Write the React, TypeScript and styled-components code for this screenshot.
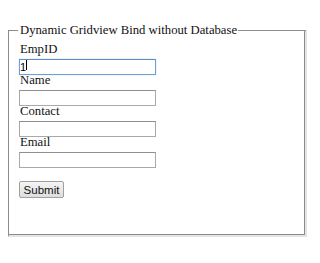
import React from "react";
import styled, { createGlobalStyle } from "styled-components";

const Global = createGlobalStyle`
  html, body { margin: 0; padding: 0; background: #ffffff; }
  body { font-family: "Liberation Serif", "Times New Roman", serif; color: #000; }
`;

const Page = styled.div`
  width: 320px;
  height: 263px;
  padding: 23px 0 0 8px;
  box-sizing: border-box;
`;

const Frame = styled.fieldset`
  box-sizing: border-box;
  width: 299px;
  height: 214px;
  margin: 0;
  padding: 4px 10px 0 10px;
  border-color: #8c8c8c #e4e4e4 #e4e4e4 #8c8c8c;
  border-style: solid;
  border-width: 1px 2px 2px 1px;
  box-shadow: inset -1px -1px 0 #8c8c8c;
  display: flex;
  flex-direction: column;
  align-items: flex-start;
`;

const Legend = styled.legend`
  font-size: 12.7px;
  line-height: 15px;
  padding: 0 1px 0 2px;
  margin-left: -1px;
  color: #111;
`;

const Label = styled.label`
  display: block;
  font-size: 12.7px;
  line-height: 15px;
  height: 15px;
  padding-left: 1px;
  color: #111;
`;

const FieldWrap = styled.div`
  position: relative;
  width: 137px;
  height: 16px;
`;

const Field = styled.input<{ $active?: boolean }>`
  box-sizing: border-box;
  width: 137px;
  height: 16px;
  margin: 0;
  padding: 0;
  font-family: "Liberation Sans", Arial, sans-serif;
  font-size: 11px;
  color: #000;
  background: #fff;
  outline: none;
  border: 1px solid ${(p) => (p.$active ? "#6f9fd8" : "#a9a9a9")};
  border-top-color: ${(p) => (p.$active ? "#5a8cc8" : "#8f8f8f")};
  box-shadow: ${(p) => (p.$active ? "0 0 1px #9fc2ea" : "none")};
`;

const Caret = styled.span`
  position: absolute;
  left: 7px;
  top: 3px;
  width: 1px;
  height: 10px;
  background: #000;
`;

const Spacer = styled.div`
  height: 15px;
`;

const Button = styled.button`
  box-sizing: border-box;
  width: 45px;
  height: 17px;
  margin: 0;
  padding: 0;
  font-family: "Liberation Sans", Arial, sans-serif;
  font-size: 11.5px;
  color: #111;
  background: linear-gradient(#f4f4f4, #dedede);
  border: 1px solid #a0a0a0;
  border-radius: 2px;
`;

export default function App() {
  return (
    <>
      <Global />
      <Page>
        <Frame>
          <Legend>Dynamic Gridview Bind without Database</Legend>
          <Label>EmpID</Label>
          <FieldWrap>
            <Field $active defaultValue="1" />
            <Caret />
          </FieldWrap>
          <Label>Name</Label>
          <FieldWrap>
            <Field />
          </FieldWrap>
          <Label>Contact</Label>
          <FieldWrap>
            <Field />
          </FieldWrap>
          <Label>Email</Label>
          <FieldWrap>
            <Field />
          </FieldWrap>
          <Spacer />
          <Button>Submit</Button>
        </Frame>
      </Page>
    </>
  );
}
